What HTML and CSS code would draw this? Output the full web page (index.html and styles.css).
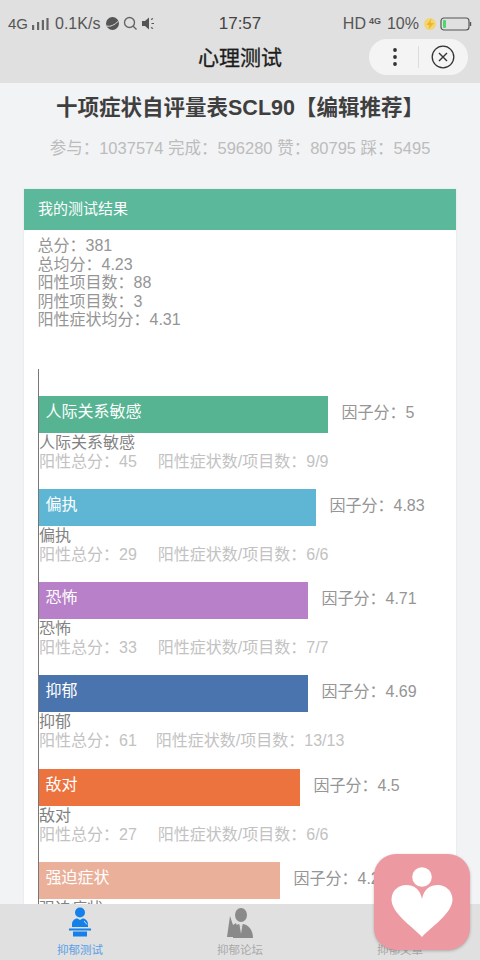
FILE: index.html
```html
<!DOCTYPE html>
<html lang="zh">
<head>
<meta charset="utf-8">
<title>心理测试</title>
<link rel="stylesheet" href="styles.css">
</head>
<body>
<div class="phone">
  <header class="top">
    <div class="status">
      <div class="status-left">
        <span class="net">4G</span>
        <svg class="signal" width="18" height="14" viewBox="0 0 18 14"><path d="M1 8h2.200v5H1zM6 5h2.200v8H6zM10.800 3h2.200v10h-2.200zM15.400 1h2.200v12h-2.200z" fill="#666"/></svg>
        <span class="speed">0.1K/s</span>
        <svg class="s-icon" width="15" height="15" viewBox="0 0 15 15"><circle cx="7.500" cy="7.500" r="6.500" fill="#555"/><path d="M1.500 10c4 1 8-1 12-5" stroke="#ddd" stroke-width="1" fill="none"/></svg>
        <svg class="s-icon" width="15" height="15" viewBox="0 0 15 15"><circle cx="6.500" cy="6.500" r="5" fill="none" stroke="#666" stroke-width="1.400"/><path d="M10 10l3.500 3.500" stroke="#666" stroke-width="1.400"/></svg>
        <svg class="s-icon" width="15" height="15" viewBox="0 0 15 15"><path d="M1 5h3l4-3.500v12L4 10H1z" fill="#555"/><path d="M10 3.500l2-1M10.500 7.500h2.500M10 11.500l2 1" stroke="#555" stroke-width="1.200"/></svg>
      </div>
      <div class="clock">17:57</div>
      <div class="status-right">
        <span class="hd">HD</span>
        <span class="g4">4G</span>
        <span class="pct">10%</span>
        <svg class="bolt" width="14" height="14" viewBox="0 0 14 14"><circle cx="7" cy="7" r="6" fill="#f2d675"/><path d="M8.500 1.500L3.500 8h3l-1 4.500L11 6H7.500z" fill="#f0b429"/></svg>
        <svg class="battery" width="32" height="14" viewBox="0 0 32 14"><rect x="1" y="1" width="28" height="12" rx="3" fill="none" stroke="#555" stroke-width="1.200"/><rect x="3" y="3" width="3" height="8" rx="1" fill="#4fd66c"/><path d="M30.500 5v4" stroke="#555" stroke-width="1.400"/></svg>
      </div>
    </div>
    <div class="nav">
      <h1 class="nav-title">心理测试</h1>
      <div class="capsule">
        <svg width="6" height="20" viewBox="0 0 6 20"><circle cx="3" cy="3" r="1.900" fill="#333"/><circle cx="3" cy="10" r="1.900" fill="#333"/><circle cx="3" cy="17" r="1.900" fill="#333"/></svg>
        <span class="capsule-line"></span>
        <svg width="24" height="24" viewBox="0 0 24 24"><circle cx="12" cy="12" r="10.800" fill="none" stroke="#333" stroke-width="1.300"/><path d="M8 8l8 8M16 8l-8 8" stroke="#333" stroke-width="1.400"/></svg>
      </div>
    </div>
  </header>

  <main class="content">
    <h2 class="title">十项症状自评量表SCL90【编辑推荐】</h2>
    <p class="stats">参与：1037574 完成：596280 赞：80795 踩：5495</p>
    <section class="card">
      <div class="card-head">我的测试结果</div>
      <div class="summary">
        <div>总分：381</div>
        <div>总均分：4.23</div>
        <div>阳性项目数：88</div>
        <div>阴性项目数：3</div>
        <div>阳性症状均分：4.31</div>
      </div>
      <div class="chart">
        <div class="item">
          <div class="bar-row"><div class="bar c1" style="width:288.500px">人际关系敏感</div><span class="score">因子分：5</span></div>
          <div class="name">人际关系敏感</div>
          <div class="detail"><span>阳性总分：45</span><span>阳性症状数/项目数：9/9</span></div>
        </div>
        <div class="item">
          <div class="bar-row"><div class="bar c2" style="width:276.500px">偏执</div><span class="score">因子分：4.83</span></div>
          <div class="name">偏执</div>
          <div class="detail"><span>阳性总分：29</span><span>阳性症状数/项目数：6/6</span></div>
        </div>
        <div class="item">
          <div class="bar-row"><div class="bar c3" style="width:268.500px">恐怖</div><span class="score">因子分：4.71</span></div>
          <div class="name">恐怖</div>
          <div class="detail"><span>阳性总分：33</span><span>阳性症状数/项目数：7/7</span></div>
        </div>
        <div class="item">
          <div class="bar-row"><div class="bar c4" style="width:268.500px">抑郁</div><span class="score">因子分：4.69</span></div>
          <div class="name">抑郁</div>
          <div class="detail"><span>阳性总分：61</span><span class="detail-tight">阳性症状数/项目数：13/13</span></div>
        </div>
        <div class="item">
          <div class="bar-row"><div class="bar c5" style="width:260.500px">敌对</div><span class="score">因子分：4.5</span></div>
          <div class="name">敌对</div>
          <div class="detail"><span>阳性总分：27</span><span>阳性症状数/项目数：6/6</span></div>
        </div>
        <div class="item">
          <div class="bar-row"><div class="bar c6" style="width:240.500px">强迫症状</div><span class="score">因子分：4.2</span></div>
          <div class="name">强迫症状</div>
        </div>
      </div>
    </section>
  </main>

  <nav class="tabs">
    <a class="tab active">
      <svg width="30" height="32" viewBox="0 0 30 32"><circle cx="15" cy="5.500" r="5" fill="#1481ea"/><path d="M7 20v-3c0-3.500 3-5.500 5.500-5.500L15 13l2.500-1.500c2.500 0 5.500 2 5.500 5.500v3z" fill="#1481ea"/><path d="M19 14l3 3.500" stroke="#cfe4fa" stroke-width="1"/><path d="M4 21.500h22v2H4zM8 24.500h14v5H8z" fill="#1481ea"/></svg>
      <span>抑郁测试</span>
    </a>
    <a class="tab">
      <svg width="30" height="32" viewBox="0 0 30 32"><ellipse cx="16" cy="8" rx="6" ry="7" fill="#8a8a8a"/><path d="M5 9l3 9 3-2 5 14H2z" fill="#8a8a8a"/><path d="M8 31c0-9 2-13 6-14l2 3 2-3c5 1 10 5 10 14z" fill="#8a8a8a"/><path d="M14.500 18l1.500 9 1.500-9-1.500 1.500z" fill="#dcdcdc"/></svg>
      <span>抑郁论坛</span>
    </a>
    <a class="tab">
      <span class="tab-blank"></span>
      <span>抑郁文章</span>
    </a>
  </nav>

  <div class="float-app">
    <svg width="96" height="96" viewBox="0 0 96 96"><circle cx="48" cy="23" r="9.800" fill="#fff"/><path d="M48 83C39 73 17 59 17.500 45 18 36 25 31 32 31c8 0 14 4 16 14 2-10 8-14 16-14 7 0 14 5 14.500 14 .5 14-21.500 28-30.500 38z" fill="#fff"/></svg>
  </div>
</div>
</body>
</html>
```
FILE: styles.css
```css
* { box-sizing: border-box; }
html, body { margin: 0; padding: 0; }
body {
  width: 480px;
  height: 960px;
  overflow: hidden;
  font-family: "Liberation Sans", "Noto Sans CJK SC", sans-serif;
  background: #f2f3f5;
}
.phone {
  position: relative;
  width: 480px;
  height: 960px;
  overflow: hidden;
  display: flex;
  flex-direction: column;
}
.top { background: #e0e0e0; height: 83px; flex: none; }
.status {
  height: 41px;
  padding: 6px 8px 0;
  display: grid;
  grid-template-columns: 1fr auto 1fr;
  align-items: center;
  color: #555;
  font-size: 14px;
}
.status-left, .status-right { display: flex; align-items: center; }
.status-left { gap: 3px; }
.status-right { justify-content: flex-end; gap: 3px; padding-right: 0; }
.net { font-size: 15px; }
.speed { margin: 0 2px 0 3px; font-size: 16px; }
.clock { font-size: 17px; color: #444; }
.hd { font-size: 16px; }
.g4 { font-size: 9px; font-weight: 700; margin: -6px 2px 0 0; }
.pct { font-size: 16px; margin: 0 1px; }
.nav {
  height: 42px;
  position: relative;
  display: flex;
  align-items: center;
  justify-content: center;
}
.nav-title {
  margin: -8px 0 0;
  font-size: 21px;
  line-height: 28px;
  font-weight: 400;
  color: #1c1c1c;
  -webkit-text-stroke: 0.300px #1c1c1c;
}
.capsule {
  position: absolute;
  right: 12px;
  top: -2px;
  width: 99px;
  height: 36px;
  border-radius: 18px;
  background: #f4f4f4;
  display: flex;
  align-items: center;
  padding-left: 23px;
}
.capsule-line { width: 1px; height: 22px; background: #ddd; margin: 0 12px 0 20px; }
.content {
  flex: 1;
  min-height: 0;
  overflow: hidden;
}
.title {
  margin: 12px 0 0;
  height: 26px;
  line-height: 26px;
  text-align: center;
  font-size: 21.500px;
  font-weight: 700;
  color: #3f3f3f;
}
.stats {
  margin: 16px 0 0;
  text-align: center;
  font-size: 16.500px;
  line-height: 22px;
  color: #bcbcbc;
}
.card {
  margin: 30px 24px 0;
  background: #fff;
  box-shadow: 0 0 2px rgba(0,0,0,.08);
}
.card-head {
  height: 41px;
  line-height: 40px;
  padding-left: 14px;
  background: #5bb89a;
  color: #fff;
  font-size: 15px;
}
.summary {
  padding: 7px 14px 0;
  margin-left: -0.500px;
  font-size: 16px;
  line-height: 18.500px;
  color: #959595;
}
.chart {
  margin: 39px 0 0 14px;
  padding-top: 27px;
  border-left: 1.500px solid #777;
}
.item { height: 93.250px; }
.bar-row {
  display: flex;
  align-items: center;
  height: 37px;
}
.bar {
  height: 37px;
  line-height: 32px;
  padding-left: 6.500px;
  color: #fff;
  font-size: 16px;
  flex: none;
}
.c1 { background: #57b492; }
.c2 { background: #5fb6d4; }
.c3 { background: #b780c8; }
.c4 { background: #4a74ad; }
.c5 { background: #ec733d; }
.c6 { background: #eab09a; }
.score {
  margin-left: 14px;
  margin-top: -7px;
  font-size: 16px;
  color: #959595;
  white-space: nowrap;
}
.name {
  margin-top: 1px;
  font-size: 16px;
  line-height: 18px;
  color: #828282;
}
.detail {
  display: flex;
  gap: 21px;
  font-size: 16px;
  line-height: 19px;
  color: #c2c2c2;
}
.detail-tight { margin-left: -2px; }
.tabs {
  position: absolute;
  left: 0;
  right: 0;
  bottom: 0;
  height: 56px;
  background: #e0e0e0;
  display: grid;
  grid-template-columns: repeat(3, 160px);
  z-index: 2;
}
.tab {
  display: flex;
  flex-direction: column;
  align-items: center;
  font-size: 11.500px;
  color: #a9a9a9;
  padding-top: 3px;
}
.tab svg, .tab-blank { height: 32px; display: block; flex: none; }
.tab span:last-child { line-height: 16px; margin-top: 3px; }
.tab.active { color: #5b9fe6; }
.float-app {
  position: absolute;
  left: 374px;
  top: 854px;
  width: 96px;
  height: 96px;
  border-radius: 22px;
  background: #ed99a1;
  box-shadow: 0 1px 3px rgba(0,0,0,.25);
  z-index: 3;
}
.float-app svg { display: block; }
```
